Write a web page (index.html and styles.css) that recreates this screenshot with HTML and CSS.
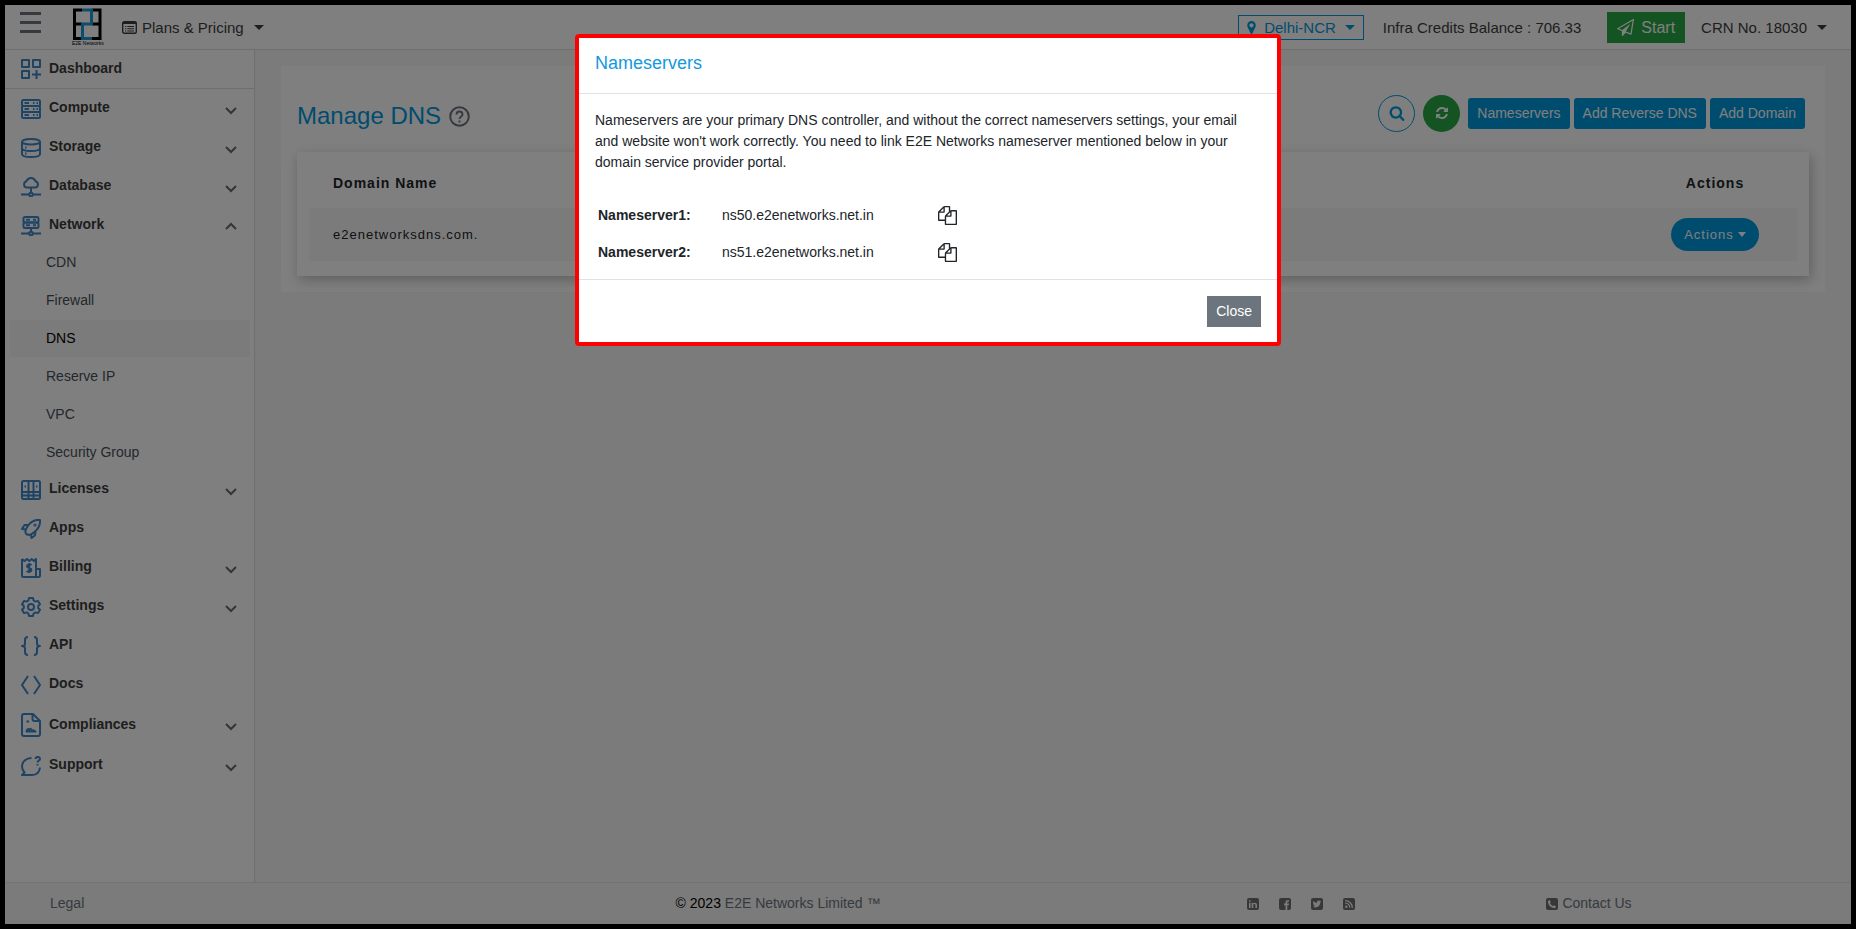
FILE: index.html
```html
<!DOCTYPE html>
<html lang="en">
<head>
  <meta charset="UTF-8">
  <meta name="viewport" content="width=device-width, initial-scale=1">
  <title>Manage DNS</title>
  <link rel="stylesheet" href="styles.css">
</head>
<body>

<!-- Navbar -->
<header class="navbar">
  <button class="menu-btn" type="button" aria-label="Toggle menu"><span></span><span></span><span></span></button>
  <a class="logo" href="#" aria-label="E2E Networks">
    <svg width="32" height="38" viewBox="0 0 32 38">
      <g fill="none" stroke-width="3">
        <path d="M10 2H2.500v28.500H20M2 16h8M20 2h8v28.500h-8M20 16h8" stroke="#000"/>
        <path d="M10 2h9.500v14h-9v14.500H20" stroke="#1a9ad6"/>
      </g>
      <text x="0" y="37" font-size="5">E2E Networks</text>
    </svg>
  </a>
  <button class="nav-link" type="button">
    <svg width="15" height="13" viewBox="0 0 15 13"><rect x=".7" y=".7" width="13.600" height="11.600" rx="1.500" fill="none" stroke="currentColor" stroke-width="1.400"/><path d="M1 1h13v2H1zM3 5h1.300v1H3zM5.300 5H12v1H5.300zM3 7.200h1.300v1H3zM5.300 7.200H12v1H5.300zM3 9.400h1.300v1H3zM5.300 9.400H12v1H5.300z" fill="currentColor"/></svg>
    Plans &amp; Pricing <i class="caret"></i>
  </button>
  <div class="nav-right">
    <button class="region" type="button">
      <svg width="15" height="15" viewBox="0 0 1792 1792" fill="currentColor"><path d="M1152 640q0-106-75-181t-181-75-181 75-75 181 75 181 181 75 181-75 75-181zm256 0q0 109-33 179l-364 774q-16 33-47.500 52t-67.500 19-67.500-19-46.500-52l-365-774q-33-70-33-179 0-212 150-362t362-150 362 150 150 362z"/></svg>
      Delhi-NCR <i class="caret"></i>
    </button>
    <span class="credits">Infra Credits Balance : 706.33</span>
    <button class="start" type="button">
      <svg width="17" height="17" viewBox="0 0 1792 1792" fill="currentColor"><path d="M1764 11q33 24 27 64l-256 1536q-5 29-32 45-14 8-31 8-11 0-24-5l-527-215-298 327q-18 21-47 21-14 0-23-4-19-7-30-23.500t-11-36.500v-452l-472-193q-37-14-40-55-3-39 32-59l1664-960q35-21 68 2zm-342 1499l221-1323-1434 827 336 137 863-639-478 797z"/></svg>
      Start
    </button>
    <button class="nav-link" type="button">CRN No. 18030 <i class="caret"></i></button>
  </div>
</header>

<div class="layout">

  <!-- Sidebar -->
  <nav class="sidebar">
    <a class="item item-top" href="#">
      <svg class="icon" viewBox="0 0 20 20"><path d="M1 1h7v7H1zM12 1h7v7h-7zM1 12h7v7H1zM15.500 11v9M11 15.500h9"/></svg>
      <span>Dashboard</span>
    </a>
    <a class="item" href="#">
      <svg class="icon" viewBox="0 0 20 20"><rect x="1" y="1" width="18" height="6" rx="1.500"/><rect x="1" y="7" width="18" height="6" rx="1.500"/><rect x="1" y="13" width="18" height="6" rx="1.500"/><path d="M3.500 4H8M12 4h1.500M15.500 4H17M3.500 10H8M12 10h1.500M15.500 10H17M3.500 16H8M12 16h1.500M15.500 16H17"/></svg>
      <span>Compute</span>
      <svg class="chev" viewBox="0 0 12 8"><path d="M1 1l5 5 5-5"/></svg>
    </a>
    <a class="item" href="#">
      <svg class="icon" viewBox="0 0 20 20"><ellipse cx="10" cy="3.800" rx="9" ry="2.800"/><path d="M1 4v12c0 4 18 4 18 0V4M1 10c0 4 18 4 18 0M4 9.500h1.500M4 15.500h1.500"/></svg>
      <span>Storage</span>
      <svg class="chev" viewBox="0 0 12 8"><path d="M1 1l5 5 5-5"/></svg>
    </a>
    <a class="item" href="#">
      <svg class="icon" viewBox="0 0 20 20"><path d="M5.500 10.500a3.200 3.200 0 0 1 0-6.200 4.700 4.700 0 0 1 9 0 3.200 3.200 0 0 1 0 6.200zM10 10.500v5M0 17.500h8M12 17.500h8"/><circle cx="10" cy="17.500" r="1.800"/></svg>
      <span>Database</span>
      <svg class="chev" viewBox="0 0 12 8"><path d="M1 1l5 5 5-5"/></svg>
    </a>
    <a class="item" href="#">
      <svg class="icon" viewBox="0 0 20 20"><rect x="2.500" y="1" width="15" height="5.500" rx="1.500"/><rect x="2.500" y="6.500" width="15" height="5.500" rx="1.500"/><path d="M5 3.800h4M12 3.800h3M5 9.300h4M12 9.300h3M10 12v4M0 17.500h8M12 17.500h8"/><circle cx="10" cy="17.500" r="1.800"/></svg>
      <span>Network</span>
      <svg class="chev chev-up" viewBox="0 0 12 8"><path d="M1 7l5-5 5 5"/></svg>
    </a>
    <div class="submenu">
      <a href="#">CDN</a>
      <a href="#">Firewall</a>
      <a class="active" href="#">DNS</a>
      <a href="#">Reserve IP</a>
      <a href="#">VPC</a>
      <a href="#">Security Group</a>
    </div>
    <a class="item" href="#">
      <svg class="icon" viewBox="0 0 20 20"><rect x="1" y="1" width="18" height="18" rx="1.500"/><path d="M7.500 1v18M12.500 1v18M1 12h18M1 15.500h6M13 15.500h6M8 15.500h4M3.500 6.500H5M15 6.500h1.500"/></svg>
      <span>Licenses</span>
      <svg class="chev" viewBox="0 0 12 8"><path d="M1 1l5 5 5-5"/></svg>
    </a>
    <a class="item" href="#">
      <svg class="icon" viewBox="0 0 20 20"><path d="M19 1c-5-.5-8.500 1-11.500 5C5 9.500 4 11 4.500 13.500c.5 2 2 2.500 4 2.300 2-.3 3.500-1.300 5.500-3.300 4-3.500 5.500-6.500 5-11.500zM7.500 6L3.500 6 1 10l3.700.6M14.500 12.500l-.5 3.700-3.500 2.800-.7-3.500"/><circle cx="14" cy="6" r=".6"/></svg>
      <span>Apps</span>
    </a>
    <a class="item" href="#">
      <svg class="icon" viewBox="0 0 20 20"><path d="M1 1l2.500 2L6 1l2.300 2 2.400-2L13 3l2-2v18M1 1v16.500Q1 19 2.500 19h15q1.500 0 1.500-1.500V11h-4M10.500 7.200C9.500 6 6 6.200 6 8.200c0 2.300 4.500 1.300 4.500 3.800 0 2-3.500 2.300-4.700.8M8.200 5v10"/></svg>
      <span>Billing</span>
      <svg class="chev" viewBox="0 0 12 8"><path d="M1 1l5 5 5-5"/></svg>
    </a>
    <a class="item" href="#">
      <svg class="icon" viewBox="0 0 20 20"><path d="M8 1h4l.6 2.500 1.900 1.100L17 3.900l2 3.400L17.200 9v2l1.800 1.700-2 3.400-2.500-.7-1.900 1.100L12 19H8l-.6-2.500-1.900-1.100-2.500.7-2-3.400L2.800 11V9L1 7.300l2-3.400 2.500.7 1.900-1.100z"/><circle cx="10" cy="10" r="3"/></svg>
      <span>Settings</span>
      <svg class="chev" viewBox="0 0 12 8"><path d="M1 1l5 5 5-5"/></svg>
    </a>
    <a class="item" href="#">
      <svg class="icon" viewBox="0 0 20 20"><path d="M7 1C4.500 1 4 2 4 4v3.500Q4 10 1 10q3 0 3 2.500V16c0 2 .5 3 3 3M13 1c2.500 0 3 1 3 3v3.500q0 2.500 3 2.500-3 0-3 2.500V16c0 2-.5 3-3 3"/></svg>
      <span>API</span>
    </a>
    <a class="item" href="#">
      <svg class="icon" viewBox="0 0 20 20"><path d="M7 1l-6 9 6 9M13 1l6 9-6 9"/></svg>
      <span>Docs</span>
    </a>
    <a class="item item-tall" href="#">
      <svg class="icon" viewBox="0 0 20 24"><path d="M12 1H3Q1 1 1 3v18q0 2 2 2h14q2 0 2-2V8zM11.500 1v5q0 2 2 2H19M5.500 8.500H8"/><path d="M5.500 18.500c.5-3 2-3 2.500-1 .5-2.500 2-2.500 3 0 1.500-1 2.500 0 3.500 1z"/></svg>
      <span>Compliances</span>
      <svg class="chev" viewBox="0 0 12 8"><path d="M1 1l5 5 5-5"/></svg>
    </a>
    <a class="item" href="#">
      <svg class="icon" viewBox="0 0 20 20"><path d="M10.500 2C5 2 1 6 1 10.500c0 3 1 4.500 2.500 6L1 19h10c4.500 0 7.500-3 8-7.500M14.500 3c0-2.800 4.500-2.800 4.500 0 0 1.500-2.500 1.600-2.500 3.500M16.500 8v1.500"/></svg>
      <span>Support</span>
      <svg class="chev" viewBox="0 0 12 8"><path d="M1 1l5 5 5-5"/></svg>
    </a>
  </nav>

  <!-- Content -->
  <main class="content">
    <section class="panel">
      <div class="panel-head">
        <h1>Manage DNS</h1>
        <svg class="help" width="21" height="21" viewBox="0 0 21 21"><circle cx="10.500" cy="10.500" r="9.300" fill="none" stroke="currentColor" stroke-width="2"/><path d="M7.500 8.500c0-4 6-4 6 0 0 2-3 2.300-3 4.500M10.500 14.500v2" fill="none" stroke="currentColor" stroke-width="1.900"/></svg>
        <div class="tools">
          <button class="round search" type="button" aria-label="Search"><svg width="16" height="16" viewBox="0 0 1792 1792" fill="currentColor"><path d="M1216 832q0-185-131.500-316.500t-316.500-131.500-316.500 131.500-131.500 316.500 131.500 316.500 316.500 131.500 316.500-131.500 131.500-316.500zm512 832q0 52-38 90t-90 38q-54 0-90-38l-343-342q-179 124-399 124-143 0-273.500-55.500t-225-150-150-225-55.500-273.500 55.500-273.500 150-225 225-150 273.500-55.500 273.500 55.500 225 150 150 225 55.500 273.500q0 220-124 399l343 343q37 37 37 90z"/></svg></button>
          <button class="round refresh" type="button" aria-label="Refresh"><svg width="14" height="14" viewBox="0 0 1792 1792" fill="currentColor"><path d="M1639 1056q0 5-1 7-64 268-268 434.500t-478 166.500q-146 0-282.500-55t-243.500-157l-129 129q-19 19-45 19t-45-19-19-45v-448q0-26 19-45t45-19h448q26 0 45 19t19 45-19 45l-137 137q71 66 161 102t187 36q134 0 250-65t186-179q11-17 53-117 8-23 30-23h192q13 0 22.500 9.500t9.500 22.500zm25-800v448q0 26-19 45t-45 19h-448q-26 0-45-19t-19-45 19-45l138-138q-148-137-349-137-134 0-250 65t-186 179q-11 17-53 117-8 23-30 23h-199q-13 0-22.500-9.500t-9.500-22.500v-7q65-268 270-434.500t480-166.500q146 0 284 55.500t245 156.500l130-129q19-19 45-19t45 19 19 45z"/></svg></button>
          <button class="btn" type="button">Nameservers</button>
          <button class="btn" type="button">Add Reverse DNS</button>
          <button class="btn" type="button">Add Domain</button>
        </div>
      </div>

      <div class="table-card">
        <table class="domains">
          <thead>
            <tr><th>Domain Name</th><th class="col-actions">Actions</th></tr>
          </thead>
          <tbody>
            <tr><td>e2enetworksdns.com.</td><td class="col-actions"><button class="pill" type="button">Actions<i class="caret"></i></button></td></tr>
          </tbody>
        </table>
      </div>
    </section>
  </main>
</div>

<!-- Footer -->
<footer class="footer">
  <a class="legal" href="#">Legal</a>
  <p><b>© 2023</b> <a href="#">E2E Networks Limited ™</a></p>
  <div class="social">
    <a href="#" aria-label="LinkedIn"><svg width="12" height="12" viewBox="0 0 12 12"><rect width="12" height="12" rx="2" fill="currentColor"/><path d="M2 4.700h1.600V10H2zM2 2.300h1.600v1.500H2zM4.700 4.700h1.600v.7c1-1.300 3.700-1 3.700 1.500V10H8.400V7.200c0-1.600-2.100-1.500-2.100 0V10H4.700z" fill="#f6f6f6"/></svg></a>
    <a href="#" aria-label="Facebook"><svg width="12" height="12" viewBox="0 0 12 12"><rect width="12" height="12" rx="2" fill="currentColor"/><path d="M6.500 12V7.300H5V5.500h1.500V4.200C6.500 2.600 7.500 2 10 2.200v1.600c-1.300 0-1.700 0-1.700.8v.9H10l-.3 1.800H8.300V12z" fill="#f6f6f6"/></svg></a>
    <a href="#" aria-label="Twitter"><svg width="12" height="12" viewBox="0 0 12 12"><rect width="12" height="12" rx="2" fill="currentColor"/><path d="M10.200 3.400l-.9.900c0 4.500-4.300 6.300-7.500 4.500 1 0 1.800-.2 2.300-.7-.8-.1-1.300-.5-1.500-1.100h.7C2.400 6.600 2 6 2 5.200l.7.200C1.900 4.700 1.900 3.900 2.300 3c1 1.100 2.200 1.700 3.700 1.800C5.600 2.500 7.900 2 8.900 3.100l1-.4-.6.900z" fill="#f6f6f6"/></svg></a>
    <a href="#" aria-label="RSS"><svg width="12" height="12" viewBox="0 0 12 12"><rect width="12" height="12" rx="2" fill="currentColor"/><circle cx="3.300" cy="8.800" r="1.200" fill="#f6f6f6"/><path d="M2.200 5.200a4.600 4.600 0 0 1 4.600 4.600M2.200 2.700a7.200 7.200 0 0 1 7.200 7.100" fill="none" stroke="#f6f6f6" stroke-width="1.300"/></svg></a>
  </div>
  <a class="contact" href="#"><svg width="12" height="12" viewBox="0 0 12 12"><rect width="12" height="12" rx="2" fill="currentColor"/><path d="M3.600 2l1.200 2-.8 1c.6 1.500 1.500 2.400 3 3l1-.8 2 1.200c-.2 1.100-.9 1.700-1.900 1.600C4.700 9.600 2.300 7 2 3.900 2 2.900 2.600 2.200 3.600 2z" fill="#f6f6f6"/></svg> Contact Us</a>
</footer>

<!-- Nameservers modal -->
<div class="backdrop">
  <div class="modal" role="dialog" aria-modal="true" aria-labelledby="modalTitle">
    <div class="modal-head"><h2 id="modalTitle">Nameservers</h2></div>
    <div class="modal-body">
      <p>Nameservers are your primary DNS controller, and without the correct nameservers settings, your email and website won't work correctly. You need to link E2E Networks nameserver mentioned below in your domain service provider portal.</p>
      <table class="ns">
        <tr>
          <th scope="row">Nameserver1:</th>
          <td>ns50.e2enetworks.net.in</td>
          <td><button class="copy" type="button" aria-label="Copy nameserver 1"><svg width="19" height="19" viewBox="0 0 1792 1792" fill="currentColor"><path d="M1696 384q40 0 68 28t28 68v1216q0 40-28 68t-68 28h-960q-40 0-68-28t-28-68v-288h-544q-40 0-68-28t-28-68v-672q0-40 20-88t48-76l408-408q28-28 76-48t88-20h416q40 0 68 28t28 68v328q68-40 128-40h416zm-544 213l-299 299h299v-299zm-640-384l-299 299h299v-299zm196 647l316-316v-416h-384v416q0 40-28 68t-68 28h-416v640h512v-256q0-40 20-88t48-76zm956 804v-1152h-384v416q0 40-28 68t-68 28h-416v640h896z"/></svg></button></td>
        </tr>
        <tr>
          <th scope="row">Nameserver2:</th>
          <td>ns51.e2enetworks.net.in</td>
          <td><button class="copy" type="button" aria-label="Copy nameserver 2"><svg width="19" height="19" viewBox="0 0 1792 1792" fill="currentColor"><path d="M1696 384q40 0 68 28t28 68v1216q0 40-28 68t-68 28h-960q-40 0-68-28t-28-68v-288h-544q-40 0-68-28t-28-68v-672q0-40 20-88t48-76l408-408q28-28 76-48t88-20h416q40 0 68 28t28 68v328q68-40 128-40h416zm-544 213l-299 299h299v-299zm-640-384l-299 299h299v-299zm196 647l316-316v-416h-384v416q0 40-28 68t-68 28h-416v640h512v-256q0-40 20-88t48-76zm956 804v-1152h-384v416q0 40-28 68t-68 28h-416v640h896z"/></svg></button></td>
        </tr>
      </table>
    </div>
    <div class="modal-foot"><button class="btn btn-close" type="button">Close</button></div>
  </div>
</div>

</body>
</html>
```
FILE: styles.css
```css
* {
  box-sizing: border-box;
}
body {
  margin: 0;
  min-height: 100vh;
  display: flex;
  flex-direction: column;
  border: 5px solid #000;
  font-family: "Liberation Sans", Arial, sans-serif;
  font-size: 14px;
  line-height: 21px;
  color: #212529;
  background: #f6f6f6;
}
h1, h2, p {
  margin: 0;
  font-weight: normal;
}
a {
  color: inherit;
  text-decoration: none;
}
button {
  font: inherit;
  color: inherit;
  background: none;
  border: 0;
  padding: 0;
  cursor: pointer;
}
svg {
  display: block;
  flex: none;
}
.caret {
  border-top: 5px solid;
  border-left: 5px solid transparent;
  border-right: 5px solid transparent;
}

/* Navbar */
.navbar {
  display: flex;
  align-items: center;
  height: 45px;
  padding: 0 24px 0 15px;
  background: #fff;
  border-bottom: 1px solid #dcdcdc;
  font-size: 15px;
  color: #3c3c3c;
}
.menu-btn {
  display: flex;
  flex-direction: column;
  gap: 6px;
  width: 21px;
  margin-bottom: 9px;
}
.menu-btn span {
  height: 3px;
  background: #6c757d;
}
.logo {
  margin: 0 18px 0 31px;
}
.nav-link {
  display: flex;
  align-items: center;
  gap: 5px;
}
.nav-link .caret {
  margin-left: 5px;
}
.nav-right {
  display: flex;
  align-items: center;
  margin-left: auto;
}
.region {
  display: flex;
  align-items: center;
  gap: 5px;
  height: 25px;
  padding: 0 8px 0 5px;
  border: 1px solid #0099dd;
  color: #0099dd;
}
.region .caret {
  margin-left: 4px;
}
.credits {
  margin: 0 26px 0 19px;
}
.start {
  display: flex;
  align-items: center;
  gap: 7px;
  height: 31px;
  margin-right: 16px;
  padding: 0 10px;
  background: #28a745;
  color: #fff;
  font-size: 16px;
}

/* Sidebar */
.layout {
  flex: 1;
  display: flex;
}
.sidebar {
  width: 250px;
  background: #fff;
  border-right: 1px solid #dcdcdc;
}
.item {
  display: flex;
  align-items: center;
  height: 39px;
  padding: 0 17px 0 16px;
  font-weight: bold;
  color: #3c3c3c;
}
.item-top {
  border-bottom: 1px solid #dcdcdc;
}
.item-tall {
  height: 42px;
}
.item span {
  padding: 0 0 2px 8px;
}
.icon {
  width: 20px;
  height: 20px;
  fill: none;
  stroke: #3f86c6;
  stroke-width: 2;
  stroke-linejoin: round;
}
.item-tall .icon {
  height: 24px;
}
.chev {
  width: 12px;
  height: 8px;
  margin: 4px 0 0 auto;
  fill: none;
  stroke: #6a6a6a;
  stroke-width: 2;
}
.chev-up {
  margin-top: 0;
}
.submenu {
  display: flex;
  flex-direction: column;
  gap: 1px;
  margin: -1px 4px -1px 5px;
}
.submenu a {
  height: 37px;
  padding: 8px 0 8px 36px;
  line-height: 21px;
  color: #495057;
}
.submenu .active {
  background: #f6f6f6;
  color: #000;
}

/* Content */
.content {
  flex: 1;
  padding: 16px 26px;
}
.panel {
  padding: 28px 16px 16px;
  background: #fff;
}
.panel-head {
  display: flex;
  align-items: center;
  height: 42px;
  margin-bottom: 16px;
}
.panel-head h1 {
  padding-top: 2px;
  font-size: 24px;
  line-height: 30px;
  color: #0099dd;
}
.help {
  margin: 2px 0 0 8px;
  color: #6c757d;
}
.tools {
  display: flex;
  align-items: center;
  gap: 4px;
  margin: 0 4px 4px auto;
}
.round {
  display: flex;
  align-items: center;
  justify-content: center;
  width: 37px;
  height: 37px;
  margin-right: 4px;
  border-radius: 50%;
}
.search {
  border: 1px solid #0099dd;
  color: #0099dd;
}
.refresh {
  background: #28a745;
  color: #fff;
}
.btn {
  height: 31px;
  padding: 0 9px;
  border-radius: 3px;
  background: #0099dd;
  color: #fff;
}
.table-card {
  padding: 12px 12px 15px;
  box-shadow: 2px 4px 12px rgba(0,0,0,0.25);
}
.domains {
  width: 100%;
  border-collapse: collapse;
  letter-spacing: 1px;
}
.domains th,
.domains td {
  padding: 0 24px;
  text-align: left;
}
.domains th {
  height: 44px;
  padding-bottom: 6px;
}
.domains td {
  height: 53px;
  background: #f6f6f6;
  font-size: 13px;
}
.domains .col-actions {
  width: 164px;
  padding: 0;
  text-align: center;
}
.domains th.col-actions {
  padding-bottom: 6px;
}
.pill {
  display: inline-flex;
  align-items: center;
  gap: 4px;
  height: 33px;
  padding: 0 13px;
  border-radius: 17px;
  background: #0099dd;
  color: #fff;
  letter-spacing: 1px;
}
.pill .caret {
  border-top-width: 5px;
  border-left-width: 4px;
  border-right-width: 4px;
}

/* Footer */
.footer {
  display: grid;
  grid-template-columns: 394fr 758fr 288fr 288fr 118fr;
  align-items: center;
  height: 42px;
  border-top: 1px solid #e4e4e4;
  text-align: center;
  color: #6c757d;
}
.footer b {
  font-weight: normal;
  color: #000;
}
.legal {
  padding-left: 45px;
  text-align: left;
}
.social {
  display: flex;
  justify-content: center;
  gap: 20px;
}
.contact {
  display: flex;
  align-items: center;
  justify-content: center;
  gap: 4px;
}
.social svg,
.contact svg {
  color: #6f6f6f;
}

/* Modal */
.backdrop {
  position: fixed;
  inset: 0;
  padding-top: 34px;
  background: rgba(0,0,0,0.5);
}
.modal {
  width: 706px;
  max-width: 100%;
  margin: 0 auto;
  background: #fff;
  border: 4px solid #f00;
  border-radius: 4px;
}
.modal-head {
  padding: 12px 16px 17px;
  border-bottom: 1px solid #dee2e6;
}
.modal-head h2 {
  font-size: 18px;
  line-height: 26px;
  color: #1299de;
}
.modal-body {
  padding: 16px 16px 8px;
}
.ns {
  margin-top: 24px;
  border-collapse: collapse;
}
.ns th,
.ns td {
  height: 37px;
  padding: 0 3px;
  text-align: left;
}
.ns th {
  width: 124px;
}
.ns td:nth-child(2) {
  width: 216px;
}
.copy {
  display: block;
}
.modal-foot {
  display: flex;
  justify-content: flex-end;
  padding: 16px 16px 15px;
  border-top: 1px solid #dee2e6;
}
.btn-close {
  background: #6c757d;
  border-radius: 0;
}
```
